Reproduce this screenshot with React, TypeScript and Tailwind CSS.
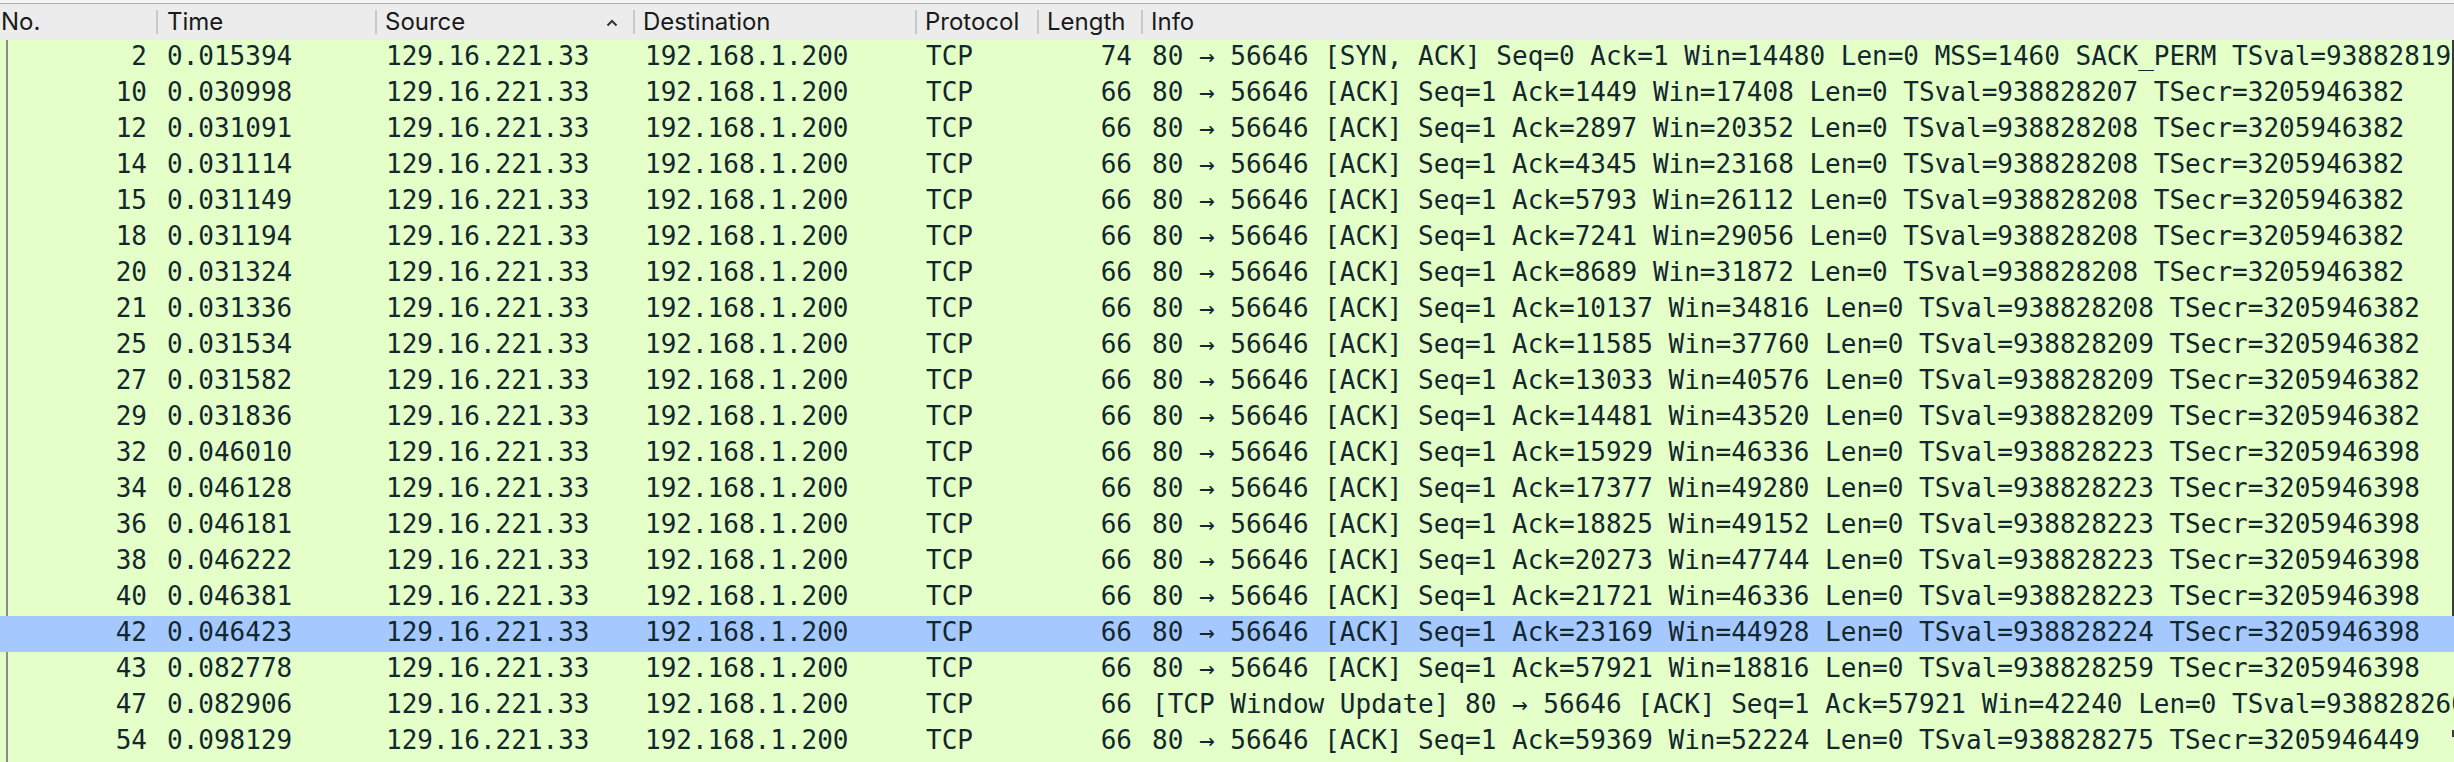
import React from "react";

type Row = { no: string; time: string; len: string; info: string; sel?: boolean };

const ack = (a: string, w: string, ts: string, ec: string) =>
  `80 → 56646 [ACK] Seq=1 Ack=${a} Win=${w} Len=0 TSval=${ts} TSecr=${ec}`;

const rows: Row[] = [
  { no: "2", time: "0.015394", len: "74", info: "80 → 56646 [SYN, ACK] Seq=0 Ack=1 Win=14480 Len=0 MSS=1460 SACK_PERM TSval=938828192 TSecr=3205946382 WS=128" },
  { no: "10", time: "0.030998", len: "66", info: ack("1449", "17408", "938828207", "3205946382") },
  { no: "12", time: "0.031091", len: "66", info: ack("2897", "20352", "938828208", "3205946382") },
  { no: "14", time: "0.031114", len: "66", info: ack("4345", "23168", "938828208", "3205946382") },
  { no: "15", time: "0.031149", len: "66", info: ack("5793", "26112", "938828208", "3205946382") },
  { no: "18", time: "0.031194", len: "66", info: ack("7241", "29056", "938828208", "3205946382") },
  { no: "20", time: "0.031324", len: "66", info: ack("8689", "31872", "938828208", "3205946382") },
  { no: "21", time: "0.031336", len: "66", info: ack("10137", "34816", "938828208", "3205946382") },
  { no: "25", time: "0.031534", len: "66", info: ack("11585", "37760", "938828209", "3205946382") },
  { no: "27", time: "0.031582", len: "66", info: ack("13033", "40576", "938828209", "3205946382") },
  { no: "29", time: "0.031836", len: "66", info: ack("14481", "43520", "938828209", "3205946382") },
  { no: "32", time: "0.046010", len: "66", info: ack("15929", "46336", "938828223", "3205946398") },
  { no: "34", time: "0.046128", len: "66", info: ack("17377", "49280", "938828223", "3205946398") },
  { no: "36", time: "0.046181", len: "66", info: ack("18825", "49152", "938828223", "3205946398") },
  { no: "38", time: "0.046222", len: "66", info: ack("20273", "47744", "938828223", "3205946398") },
  { no: "40", time: "0.046381", len: "66", info: ack("21721", "46336", "938828223", "3205946398") },
  { no: "42", time: "0.046423", len: "66", info: ack("23169", "44928", "938828224", "3205946398"), sel: true },
  { no: "43", time: "0.082778", len: "66", info: ack("57921", "18816", "938828259", "3205946398") },
  { no: "47", time: "0.082906", len: "66", info: "[TCP Window Update] 80 → 56646 [ACK] Seq=1 Ack=57921 Win=42240 Len=0 TSval=938828260 TSecr=3205946398" },
  { no: "54", time: "0.098129", len: "66", info: ack("59369", "52224", "938828275", "3205946449") },
];

function HeaderCell({ children, w, first }: { children: React.ReactNode; w: string; first?: boolean }) {
  return (
    <div className={`relative flex h-full shrink-0 items-center ${w}`}>
      {!first && <div className="absolute left-0 top-[6px] h-[24px] w-[2px] bg-[#c9c9c9]" />}
      {children}
    </div>
  );
}

export default function App() {
  return (
    <div className="relative h-[762px] w-[2454px] overflow-hidden bg-[#e4ffc7]">
      {/* header */}
      <div className="h-[3px] bg-[#f5f5f5]" />
      <div className="h-[1px] bg-[#b0b0b0]" />
      <div
        className="flex h-[36px] bg-[#ececec] text-[24px] leading-[36px] text-[#1a1a1a]"
        style={{ fontFamily: "Inter, 'Liberation Sans', sans-serif" }}
      >
        <HeaderCell w="w-[156px]" first>
          <span className="pl-[1px]">No.</span>
        </HeaderCell>
        <HeaderCell w="w-[219px]">
          <span className="pl-[11px]">Time</span>
        </HeaderCell>
        <HeaderCell w="w-[258px]">
          <div className="flex w-full items-center justify-between pl-[10px] pr-[15px]">
            <span>Source</span>
            <svg width="12" height="8" viewBox="0 0 12 8" className="mt-[2px]">
              <polyline points="1.5,6.5 6,2 10.5,6.5" fill="none" stroke="#333" strokeWidth="2" />
            </svg>
          </div>
        </HeaderCell>
        <HeaderCell w="w-[282px]">
          <span className="pl-[10px]">Destination</span>
        </HeaderCell>
        <HeaderCell w="w-[122px]">
          <span className="pl-[10px]">Protocol</span>
        </HeaderCell>
        <HeaderCell w="w-[104px]">
          <span className="pl-[10px]">Length</span>
        </HeaderCell>
        <HeaderCell w="flex-1">
          <span className="pl-[10px]">Info</span>
        </HeaderCell>
      </div>

      {/* rows */}
      <div
        className="text-[26px] leading-[32px] text-[#12272e]"
        style={{ fontFamily: "'DejaVu Sans Mono', 'Liberation Mono', monospace" }}
      >
        {rows.map((r) => (
          <div
            key={r.no}
            className={`flex h-[36px] whitespace-nowrap ${r.sel ? "bg-[#a5c9ff]" : "bg-[#e4ffc7]"}`}
          >
            <div
              className={`ml-[6px] w-[150px] shrink-0 border-l-2 pr-[9px] text-right ${
                r.sel ? "border-transparent" : "border-[#8c8c8c]"
              }`}
            >
              {r.no}
            </div>
            <div className="w-[219px] shrink-0 pl-[11px]">{r.time}</div>
            <div className="w-[258px] shrink-0 pl-[11px]">129.16.221.33</div>
            <div className="w-[282px] shrink-0 pl-[12px]">192.168.1.200</div>
            <div className="w-[122px] shrink-0 pl-[11px]">TCP</div>
            <div className="w-[104px] shrink-0 pr-[9px] text-right">{r.len}</div>
            <div className="min-w-0 flex-1 overflow-hidden pl-[11px]">{r.info}</div>
          </div>
        ))}
        <div className="h-[2px] border-l-2 border-[#8c8c8c] ml-[6px]" />
      </div>

      {/* right edge scroll indicator marks */}
      <div className="absolute right-0 top-[40px] h-[576px] w-[2px] bg-[#3a3a3a]" />
      <div className="absolute right-0 top-[730px] h-[7px] w-[2px] bg-[#3a3a3a]" />
    </div>
  );
}
